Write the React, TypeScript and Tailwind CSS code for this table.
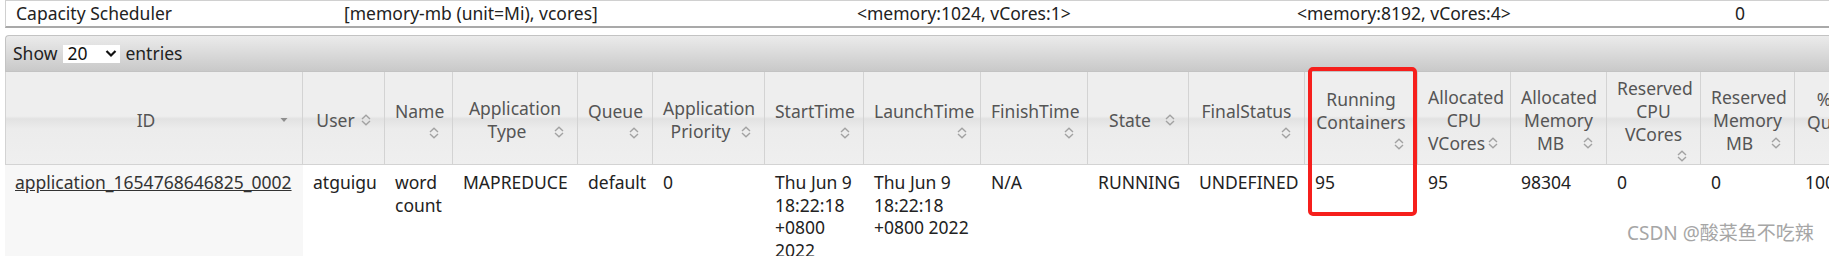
import React from 'react';

type Icon = 'sorted' | 'inline' | 'below';

const headers: { w: string; lines: string[]; icon: Icon }[] = [
  { w: 'w-[298px]', lines: ['ID'], icon: 'sorted' },
  { w: 'w-[82px]', lines: ['User'], icon: 'inline' },
  { w: 'w-[68px]', lines: ['Name'], icon: 'below' },
  { w: 'w-[125px]', lines: ['Application', 'Type'], icon: 'inline' },
  { w: 'w-[75px]', lines: ['Queue'], icon: 'below' },
  { w: 'w-[112px]', lines: ['Application', 'Priority'], icon: 'inline' },
  { w: 'w-[99px]', lines: ['StartTime'], icon: 'below' },
  { w: 'w-[117px]', lines: ['LaunchTime'], icon: 'below' },
  { w: 'w-[107px]', lines: ['FinishTime'], icon: 'below' },
  { w: 'w-[101px]', lines: ['State'], icon: 'inline' },
  { w: 'w-[116px]', lines: ['FinalStatus'], icon: 'below' },
  { w: 'w-[113px]', lines: ['Running', 'Containers'], icon: 'below' },
  { w: 'w-[93px]', lines: ['Allocated', 'CPU', 'VCores'], icon: 'inline' },
  { w: 'w-[96px]', lines: ['Allocated', 'Memory', 'MB'], icon: 'inline' },
  { w: 'w-[94px]', lines: ['Reserved', 'CPU', 'VCores'], icon: 'below' },
  { w: 'w-[94px]', lines: ['Reserved', 'Memory', 'MB'], icon: 'inline' },
  { w: 'w-[80px]', lines: ['% of', 'Queue'], icon: 'below' },
];

const cells = [
  'atguigu',
  'word count',
  'MAPREDUCE',
  'default',
  '0',
  'Thu Jun 9 18:22:18 +0800 2022',
  'Thu Jun 9 18:22:18 +0800 2022',
  'N/A',
  'RUNNING',
  'UNDEFINED',
  '95',
  '95',
  '98304',
  '0',
  '0',
  '100.0',
];

const SortIcon = () => (
  <svg width="16" height="16" viewBox="0 0 16 16" className="shrink-0">
    <path d="M4 7 L8 3.3 L12 7 M4 9 L8 12.7 L12 9" fill="none" stroke="#a2a2a2" strokeWidth="1.4" />
  </svg>
);

const SortedIcon = () => (
  <svg width="16" height="16" viewBox="0 0 16 16" className="shrink-0">
    <path d="M4.5 6 L11.5 6 L8 10 Z" fill="#8e8e8e" />
  </svg>
);

function HeaderCell({ lines, icon }: { lines: string[]; icon: Icon }) {
  const last = lines.length - 1;
  return (
    <div className="flex flex-col">
      {lines.map((l, i) =>
        i === last && icon !== 'below' ? (
          <div key={i} className="flex items-center">
            <span className="flex-1 whitespace-nowrap text-center">{l}</span>
            {icon === 'sorted' ? <SortedIcon /> : <SortIcon />}
          </div>
        ) : (
          <div key={i} className="whitespace-nowrap text-center">
            {l}
          </div>
        )
      )}
      {icon === 'below' && (
        <div className="mt-[2px] flex justify-end">
          <SortIcon />
        </div>
      )}
    </div>
  );
}

export default function App() {
  return (
    <div className="relative h-[256px] w-full overflow-hidden bg-white font-['Noto_Sans','Noto_Sans_CJK_SC',sans-serif] text-[17.5px] text-[#222]">
      {/* scheduler summary row */}
      <div className="ml-[5px] flex h-[28px] w-[1900px] items-center whitespace-nowrap border-l border-t border-[#d0d0d0] border-b-2 border-b-[#a9a9a9]">
        <div className="w-[328px] pl-[10px]">Capacity Scheduler</div>
        <div className="w-[513px] pl-[10px]">[memory-mb (unit=Mi), vcores]</div>
        <div className="w-[440px] pl-[10px]">&lt;memory:1024, vCores:1&gt;</div>
        <div className="w-[438px] pl-[10px]">&lt;memory:8192, vCores:4&gt;</div>
        <div className="pl-[10px]">0</div>
      </div>

      <div className="ml-[5px] mt-[7px] w-[1870px]">
        <div className="flex h-[37px] items-center rounded-tl-[4px] border border-r-0 border-[#c3c3c3] bg-[linear-gradient(#ebebeb,#c9c9c9)] pl-[7px] text-[#222]">
          <span>Show</span>
          <span className="ml-[6px] flex h-[18px] w-[57px] items-center justify-between bg-white pl-[4px] pr-[2px] text-[#111]">
            <span>20</span>
            <svg width="14" height="9" viewBox="0 0 14 9">
              <path d="M2.5 2 L7 6.5 L11.5 2" fill="none" stroke="#111" strokeWidth="2.2" />
            </svg>
          </span>
          <span className="ml-[5px]">entries</span>
        </div>

        <table className="w-[1870px] table-fixed border-separate border-spacing-0">
          <colgroup>
            {headers.map((h, i) => (
              <col key={i} className={h.w} />
            ))}
          </colgroup>
          <thead>
            <tr>
              {headers.map((h, i) => (
                <th
                  key={i}
                  className={
                    'h-[93px] border-b border-r border-[#d3d3d3] bg-[linear-gradient(#eeeeee_0%,#eeeeee_48%,#e2e2e2_51%,#ececec_62%,#efefef_100%)] px-[10px] pb-0 pt-[4px] align-middle font-normal leading-[23px] text-[#555] ' +
                    (i === 0 ? 'border-l' : '')
                  }
                >
                  <HeaderCell lines={h.lines} icon={h.icon} />
                </th>
              ))}
            </tr>
          </thead>
          <tbody>
            <tr>
              <td className="bg-[#f7f7f7] px-[10px] pb-[6px] pt-[6px] align-top leading-[22.5px]">
                <a href="#" className="whitespace-nowrap text-[#333] underline">
                  application_1654768646825_0002
                </a>
              </td>
              {cells.map((c, i) => (
                <td key={i} className="px-[10px] pb-[6px] pt-[6px] align-top leading-[22.5px]">
                  {c}
                </td>
              ))}
            </tr>
          </tbody>
        </table>
      </div>

      {/* annotation box */}
      <div className="absolute left-[1308px] top-[67px] h-[149px] w-[109px] rounded-[5px] border-[4px] border-[#f61f1c]" />

      <div className="absolute left-[1627px] top-[221px] whitespace-nowrap text-[19px] leading-[24px] text-[#a6a6a6]">
        CSDN @酸菜鱼不吃辣
      </div>
    </div>
  );
}
